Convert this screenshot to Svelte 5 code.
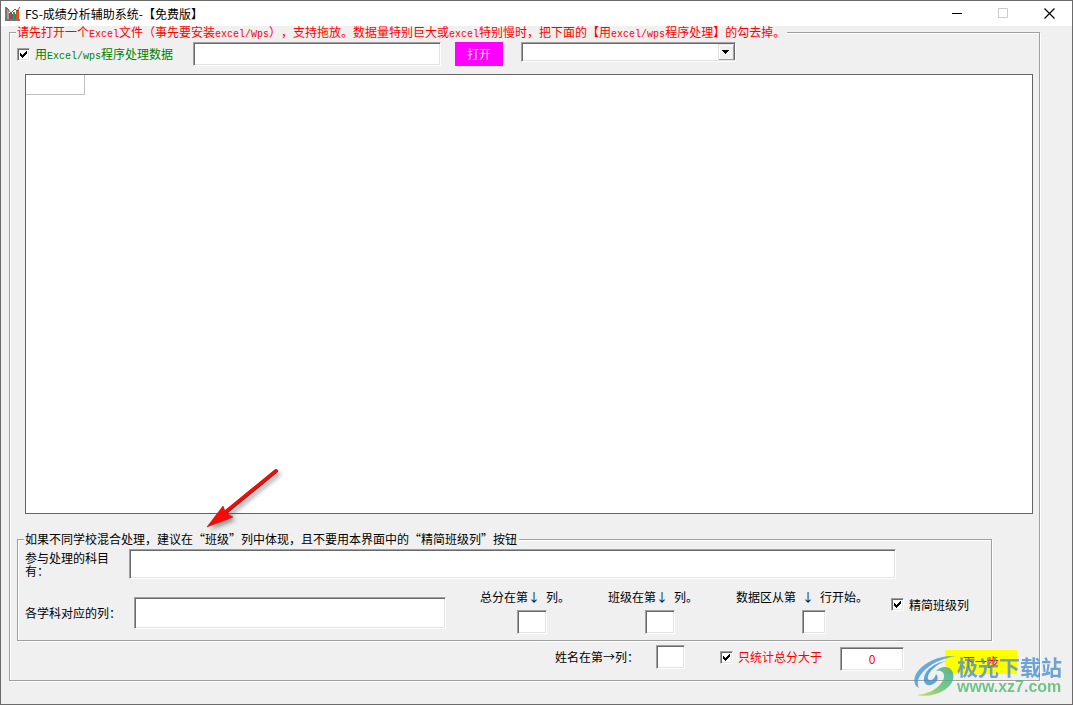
<script>
	const columns = [
		{ id: 'total', before: '总分在第↓', after: '列。' },
		{ id: 'class', before: '班级在第↓', after: '列。' },
		{ id: 'start', before: '数据区从第', arrow: '↓', after: '行开始。' }
	];

	let useExcel = true;
	let shortClass = true;
	let onlyAbove = true;
	let minScore = '0';
	let filePath = '';
	let sheet = '';
	let subjects = '';
	let subjectColumns = '';
	let nameColumn = '';
	let columnValues = { total: '', class: '', start: '' };
</script>

<svelte:head>
	<title>FS-成绩分析辅助系统</title>
</svelte:head>

<main class="window">
	<header class="titlebar">
		<svg class="app-icon" width="16" height="16" viewBox="0 0 16 16">
			<path d="M1 1v13h14" fill="none" stroke="#777" stroke-width="2" />
			<path d="M2 3h2v10H2z" fill="#9aa3a8" />
			<path d="M4 7h3v6H4z" fill="#e0301e" />
			<path d="M8 6h2v7H8z" fill="#18a558" />
			<path d="M11 4h3v9h-3z" fill="#e8491d" />
			<path d="M2 2l4 5 4-4 2 2 3-4" fill="none" stroke="#8a4a40" />
			<path d="M7.500 8v5M10.500 8v5" stroke="#3b6ea5" />
		</svg>
		<h1>FS-成绩分析辅助系统-【免费版】</h1>
		<div class="controls">
			<button type="button" aria-label="最小化">
				<svg width="11" height="11"><path d="M0 5.500h10" stroke="#000" /></svg>
			</button>
			<button type="button" aria-label="最大化" disabled>
				<svg width="11" height="11"><path d="M.5.5h9v9h-9z" fill="none" stroke="#ccc" /></svg>
			</button>
			<button type="button" aria-label="关闭">
				<svg width="11" height="11"><path d="M.5.5l10 10M10.500.5l-10 10" stroke="#000" stroke-width="1.200" /></svg>
			</button>
		</div>
	</header>

	<fieldset class="group outer">
		<legend class="red">请先打开一个<span class="en">Excel</span>文件（事先要安装<span class="en">excel/Wps</span>），支持拖放。数据量特别巨大或<span class="en">excel</span>特别慢时，把下面的【用<span class="en">excel/wps</span>程序处理】的勾去掉。</legend>

		<div class="file-row">
			<label class="check green">
				<input type="checkbox" bind:checked={useExcel} />
				<span>用<span class="en">Excel/wps</span>程序处理数据</span>
			</label>
			<input class="box path" type="text" aria-label="文件" bind:value={filePath} />
			<button class="open" type="button">打开</button>
			<select class="sheet" aria-label="工作表" bind:value={sheet}>
				<option value=""></option>
			</select>
		</div>

		<div class="sheet-view">
			<table>
				<tbody>
					<tr><td></td></tr>
				</tbody>
			</table>
		</div>

		<fieldset class="group inner">
			<legend>如果不同学校混合处理，建议在“班级”列中体现，且不要用本界面中的“精简班级列”按钮</legend>

			<div class="subjects">
				<label for="subjects">参与处理的科目<br />有：</label>
				<input class="box" id="subjects" type="text" bind:value={subjects} />
			</div>

			<div class="mapping">
				<label class="mapping-label" for="subject-columns">各学科对应的列：</label>
				<input class="box mapping-input" id="subject-columns" type="text" bind:value={subjectColumns} />
				<div class="columns">
					{#each columns as column}
						<div class="column">
							<label for={column.id}>
								{column.before}<span class="en">&nbsp;</span>{#if column.arrow}{column.arrow}<span class="en">&nbsp;</span>{/if}{column.after}
							</label>
							<input class="box small {column.id}" id={column.id} type="text" bind:value={columnValues[column.id]} />
						</div>
					{/each}
				</div>
				<label class="check short">
					<input type="checkbox" bind:checked={shortClass} />
					<span>精简班级列</span>
				</label>
			</div>

			<svg class="pointer" width="90" height="76" viewBox="0 0 90 76" aria-hidden="true">
				<g class="shadow">
					<path d="M76 7L26 48" stroke="#333" stroke-width="3" stroke-linecap="round" />
					<path d="M7 63L23 42L25 47L29 51L33 53Z" fill="#333" />
				</g>
				<path d="M76 7L26 48" stroke="#a51414" stroke-width="4" stroke-linecap="round" />
				<path d="M7 63L23 42L25 47L29 51L33 53Z" fill="#fb0808" stroke="#b01515" stroke-width=".6" />
				<path d="M76 7L24 49" stroke="#fb0808" stroke-width="2.800" stroke-linecap="round" />
			</svg>
		</fieldset>

		<div class="bottom-row">
			<label for="name-column">姓名在第→列：</label>
			<input class="box small name" id="name-column" type="text" bind:value={nameColumn} />
			<label class="check red only">
				<input type="checkbox" bind:checked={onlyAbove} />
				<span>只统计总分大于</span>
			</label>
			<input class="box small score" type="text" aria-label="总分" bind:value={minScore} />
			<button class="next" type="button">下一步</button>
		</div>
	</fieldset>

	<div class="watermark">
		<svg width="44" height="42" viewBox="0 0 44 42" aria-hidden="true">
			<defs>
				<linearGradient id="tail" x1="0" y1="1" x2="1" y2="0">
					<stop offset="0" stop-color="#c9d843" />
					<stop offset=".5" stop-color="#55c06b" />
					<stop offset="1" stop-color="#3a9fa8" />
				</linearGradient>
			</defs>
			<path d="M43 1C28 0 13 6 5 16C-1 24 1 31 6 33C3 27 6 20 13 14C21 7 31 3 43 1Z" fill="#4598d8" />
			<path d="M34 6C22 7 12 15 11 23C10 29 15 32 20 29C25 27 26 22 23 19C22 23 19 26 16 25C13 23 16 17 21 13C25 9 29 7 34 6Z" fill="#3c8fd2" />
			<path d="M23 16C31 14 33 21 29 27C24 35 14 39 4 40C16 43 31 38 38 29C43 21 40 12 32 12C28 12 25 14 23 16Z" fill="url(#tail)" />
		</svg>
		<div class="mark-text">
			<span class="mark-name">极光下载站</span>
			<span class="mark-site">www.xz7.com</span>
		</div>
	</div>
</main>

<style>
	:global(body) {
		margin: 0;
	}

	.window {
		position: relative;
		box-sizing: border-box;
		min-height: 100vh;
		display: flex;
		flex-direction: column;
		border: 1px solid #6b6b6b;
		background: #f0f0f0;
		color: #000;
		font-family: 'Noto Sans CJK SC', sans-serif;
		font-size: 12px;
		line-height: 12px;
		text-spacing-trim: space-all;
	}

	input,
	button,
	select {
		box-sizing: border-box;
		margin: 0;
		padding: 0;
		border: 0;
		border-radius: 0;
		font: inherit;
		color: inherit;
	}

	label,
	legend,
	h1 {
		white-space: nowrap;
	}

	.en {
		font-family: 'Liberation Mono', monospace;
		font-size: 10px;
		line-height: 0;
	}

	.red {
		color: #f00;
	}

	.green {
		color: #008000;
	}

	/* title bar */
	.titlebar {
		display: flex;
		align-items: center;
		height: 25px;
		padding-left: 4px;
		background: #fff;
	}

	h1 {
		flex: 1;
		margin: 0 0 0 4px;
		font-size: 12px;
		font-weight: 400;
	}

	.controls {
		display: flex;
		height: 100%;
	}

	.controls button {
		display: flex;
		align-items: center;
		justify-content: center;
		width: 46px;
		background: none;
	}

	/* group boxes */
	.group {
		min-width: 0;
		padding: 0;
		border: 1px solid #a0a0a0;
		box-shadow: 1px 1px 0 #fff, inset 1px 1px 0 #fff;
	}

	legend {
		margin-left: 6px;
		padding: 0 2px 0 1px;
		background: #f0f0f0;
	}

	.outer {
		margin: 0 32px 23px 8px;
	}

	.inner {
		position: relative;
		margin: 19px 47px 0 7px;
		padding-bottom: 6px;
	}

	.box {
		padding: 0 4px;
		border: 1px solid;
		border-color: #a0a0a0 #fff #fff #a0a0a0;
		background: #fff;
		box-shadow: inset 1px 1px 0 #696969, inset -1px -1px 0 #e3e3e3;
	}

	.small {
		height: 24px;
	}

	.check {
		display: flex;
		align-items: center;
		gap: 5px;
	}

	.check input {
		appearance: none;
		width: 13px;
		height: 13px;
		border: 1px solid;
		border-color: #a0a0a0 #fff #fff #a0a0a0;
		background: #fff;
		box-shadow: inset 1px 1px 0 #696969, inset -1px -1px 0 #e3e3e3;
	}

	.check input:checked {
		background: #fff url("data:image/svg+xml,%3Csvg xmlns='http://www.w3.org/2000/svg' width='11' height='11' viewBox='1 1 11 11'%3E%3Cpath d='M3 5h1v1h1v1h1v-1h1v-1h1v-1h1v-1h1v3h-1v1h-1v1h-1v1h-1v1h-1v-1h-1v-1h-1z'/%3E%3C/svg%3E") no-repeat;
	}

	/* file row */
	.file-row {
		display: flex;
		align-items: center;
		padding: 4px 7px 8px;
	}

	.path {
		width: 248px;
		height: 24px;
		margin: 0 14px 0 20px;
	}

	.open {
		width: 48px;
		height: 24px;
		margin-right: 18px;
		background: #f0f;
		color: #fff;
	}

	.sheet {
		appearance: none;
		align-self: flex-start;
		width: 215px;
		height: 20px;
		padding: 0 20px 0 4px;
		border: 1px solid;
		border-color: #a0a0a0 #fff #fff #a0a0a0;
		background: #fff url("data:image/svg+xml,%3Csvg xmlns='http://www.w3.org/2000/svg' width='17' height='17' shape-rendering='crispEdges'%3E%3Cpath fill='%23696969' d='M0 0h17v17H0z'/%3E%3Cpath fill='%23e3e3e3' d='M0 0h16v16H0z'/%3E%3Cpath fill='%23a0a0a0' d='M1 1h15v15H1z'/%3E%3Cpath fill='%23fff' d='M1 1h14v14H1z'/%3E%3Cpath fill='%23f0f0f0' d='M2 2h13v13H2z'/%3E%3Cpath d='M4 6h7v1H4zM5 7h5v1H5zM6 8h3v1H6zM7 9h1v1H7z'/%3E%3C/svg%3E") no-repeat right 0 top 1px;
		box-shadow: inset 1px 1px 0 #696969, inset 0 -1px 0 #e3e3e3;
	}

	/* the sheet preview takes the height that the rows around it leave */
	.sheet-view {
		height: calc(100vh - 267px);
		min-height: 120px;
		margin: 0 6px 0 15px;
		border: 1px solid #646464;
		background: #fff;
	}

	table {
		border-spacing: 0;
	}

	td {
		width: 58px;
		height: 19px;
		padding: 0;
		border: solid #c0c0c0;
		border-width: 0 1px 1px 0;
	}

	/* column settings */
	.subjects {
		display: flex;
		padding: 4px 95px 0 7px;
	}

	.subjects label {
		width: 104px;
		padding-top: 2px;
		line-height: 13px;
	}

	.subjects .box {
		flex: 1;
		height: 30px;
	}

	.mapping {
		display: flex;
		align-items: center;
		padding: 12px 7px 0;
	}

	.mapping-label {
		width: 109px;
	}

	.mapping-input {
		width: 312px;
		height: 32px;
		margin-right: 34px;
	}

	.columns {
		display: grid;
		grid-template-columns: 128px 128px 155px;
	}

	.column {
		display: flex;
		flex-direction: column;
		align-items: flex-start;
		gap: 7px;
	}

	.column .box {
		width: 30px;
		margin-left: 37px;
	}

	.column .start {
		width: 24px;
		margin-left: 66px;
	}

	.short {
		padding-bottom: 16px;
	}

	.pointer {
		position: absolute;
		left: 182px;
		bottom: 100px;
		pointer-events: none;
	}

	.shadow {
		opacity: 0.5;
		filter: blur(2px);
		transform: translate(3px, 3px);
	}

	/* bottom row */
	.bottom-row {
		display: flex;
		align-items: flex-start;
		justify-content: flex-end;
		padding: 4px 22px 6px 7px;
		line-height: 24px;
	}

	.name {
		width: 29px;
		margin-left: 17px;
	}

	.only {
		margin: 0 18px 0 35px;
	}

	.score {
		width: 64px;
		margin-top: 2px;
		color: #f00;
		text-align: center;
	}

	.next {
		width: 72px;
		height: 24px;
		margin: 5px 0 0 41px;
		background: #ff0;
		color: #f00;
	}

	/* site mark over the lower right corner */
	.watermark {
		position: absolute;
		right: 10px;
		bottom: 7px;
		display: flex;
		align-items: center;
		opacity: 0.8;
		pointer-events: none;
	}

	.mark-text {
		display: flex;
		flex-direction: column;
	}

	.mark-name {
		color: #4d8fd0;
		font-size: 21px;
		font-weight: 700;
		line-height: 22px;
	}

	.mark-site {
		color: #4dbb6c;
		font-family: 'Liberation Sans', sans-serif;
		font-size: 16px;
		font-weight: 700;
		line-height: 20px;
	}
</style>
